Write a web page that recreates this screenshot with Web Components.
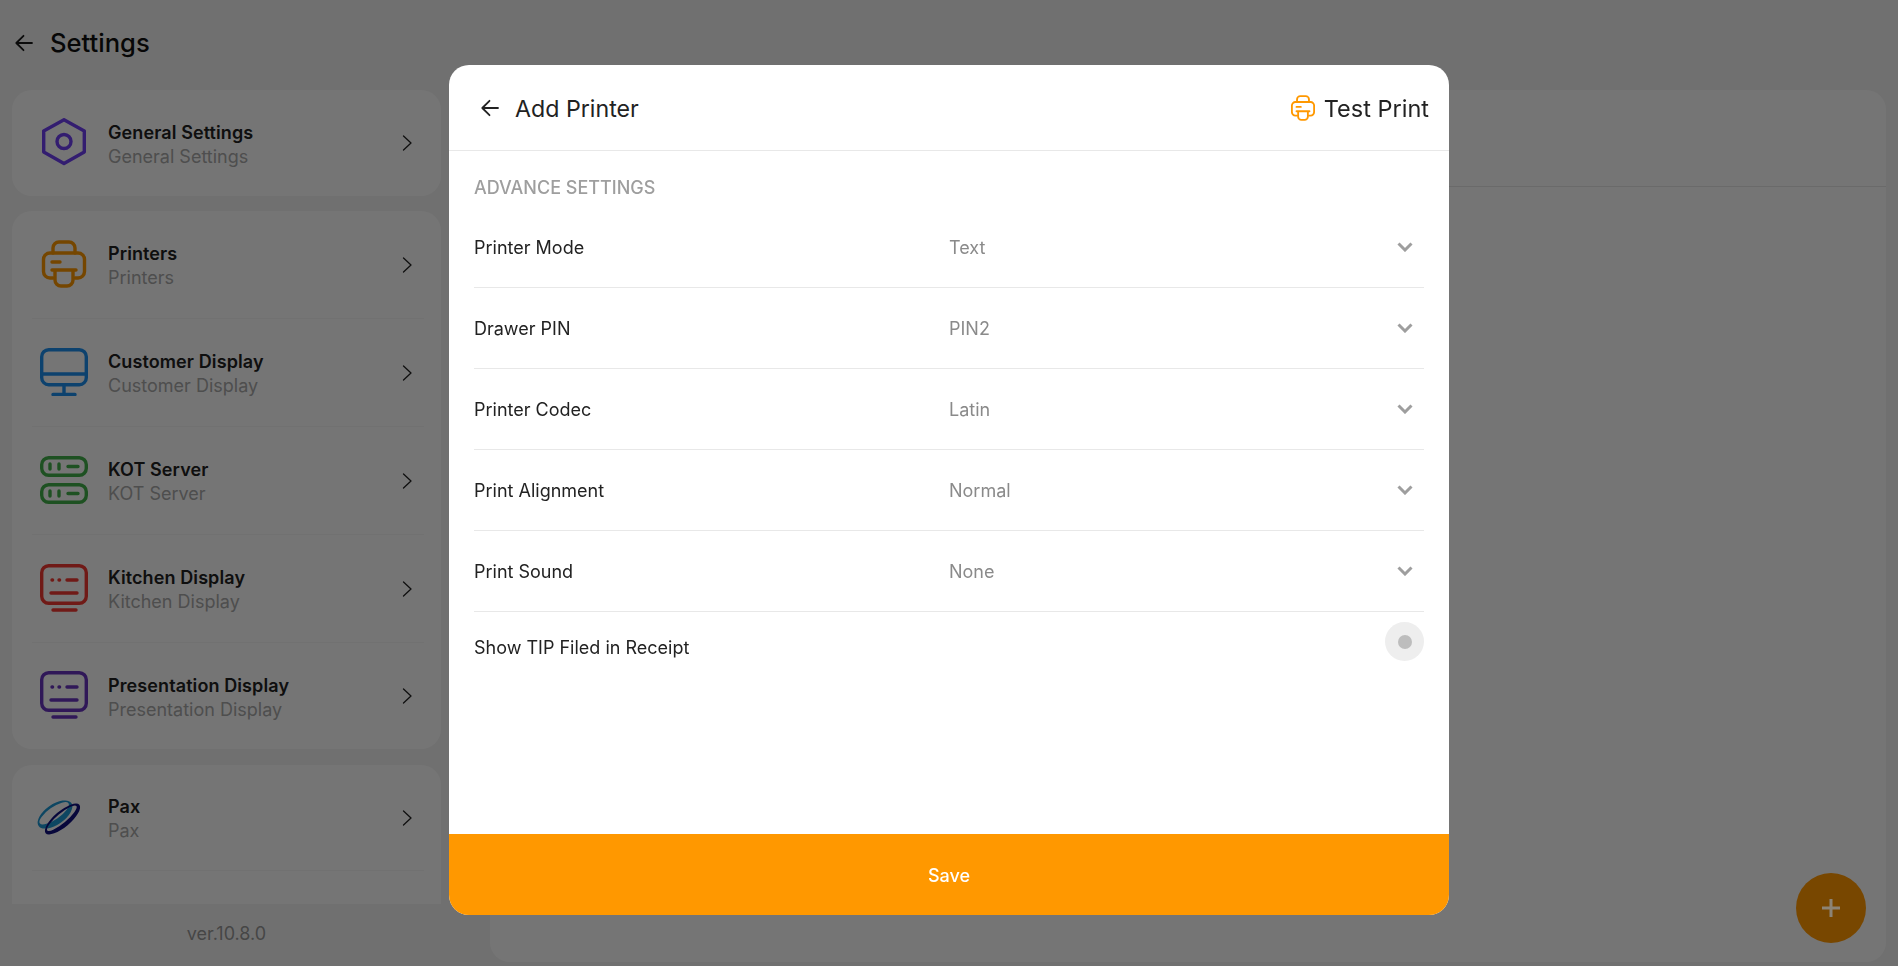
<!DOCTYPE html>
<html>
<head>
<meta charset="utf-8">
<title>Settings</title>
<style>
  html, body { margin: 0; height: 100%; overflow: hidden; }
  body { font-family: Inter, "Noto Sans", sans-serif; background: #f5f5f5; color: #1a1a1a; }
</style>
</head>
<body>

<settings-app>
  <settings-sidebar>
    <settings-group>
      <settings-item label="General Settings" icon="hexagon"></settings-item>
    </settings-group>
    <settings-group>
      <settings-item label="Printers" icon="printer" divider></settings-item>
      <settings-item label="Customer Display" icon="monitor" divider></settings-item>
      <settings-item label="KOT Server" icon="server" divider></settings-item>
      <settings-item label="Kitchen Display" icon="kitchen" divider></settings-item>
      <settings-item label="Presentation Display" icon="presentation"></settings-item>
    </settings-group>
    <settings-group>
      <settings-item label="Pax" icon="pax" divider></settings-item>
    </settings-group>
  </settings-sidebar>
  <printer-panel></printer-panel>
</settings-app>

<add-printer-dialog>
  <form-select label="Printer Mode" value="Text"></form-select>
  <form-select label="Drawer PIN" value="PIN2"></form-select>
  <form-select label="Printer Codec" value="Latin"></form-select>
  <form-select label="Print Alignment" value="Normal"></form-select>
  <form-select label="Print Sound" value="None"></form-select>
  <form-switch label="Show TIP Filed in Receipt"></form-switch>
</add-printer-dialog>

<script>
const printerPaths = `<path d="M13 13V8a6 6 0 0 1 6-6h10a6 6 0 0 1 6 6v5"/><path d="M13 38h-3a6.5 6.5 0 0 1-6.5-6.5v-12A6.5 6.5 0 0 1 10 13h28a6.5 6.5 0 0 1 6.5 6.5v12A6.5 6.5 0 0 1 38 38h-3"/><path d="M12 30h24M15 30v10a6 6 0 0 0 6 6h6a6 6 0 0 0 6-6V30M12 22h8"/>`;
const screenPaths = `<rect x="1.7" y="1.7" width="44.6" height="37.6" rx="7"/><path d="M12 16h.6M19 16h.6M27 16h10M11 29h26M13 46h23"/>`;
const stroke = (color) => `fill="none" stroke="${color}" stroke-width="3.4" stroke-linecap="round" stroke-linejoin="round"`;

const ICONS = {
  hexagon: `<svg width="48" height="48" viewBox="0 0 48 48" ${stroke('#6f3ff5')}><path d="M24 1.7 44.3 13v21L24 45.5 3.7 34V13z"/><circle cx="24" cy="23.5" r="7"/></svg>`,
  printer: `<svg width="48" height="48" viewBox="0 0 48 48" ${stroke('#ff9800')}>${printerPaths}</svg>`,
  monitor: `<svg width="48" height="48" viewBox="0 0 48 48" ${stroke('#1e90f0')}><rect x="1.7" y="1.7" width="44.6" height="35" rx="7"/><path d="M2 26h44M24 37v9.5M13 46.5h22"/></svg>`,
  server: `<svg width="48" height="48" viewBox="0 0 48 48" ${stroke('#43b04a')}><rect x="1.7" y="1.7" width="44.6" height="17.6" rx="7"/><rect x="1.7" y="28.7" width="44.6" height="17.6" rx="7"/><path d="M10 8v5M19 8v5M28 10.5h10M10 35v5M19 35v5M28 37.5h10"/></svg>`,
  kitchen: `<svg width="48" height="48" viewBox="0 0 48 48" ${stroke('#f43a32')}>${screenPaths}</svg>`,
  presentation: `<svg width="48" height="48" viewBox="0 0 48 48" ${stroke('#6a35c0')}>${screenPaths}</svg>`,
  pax: `<svg width="48" height="48" viewBox="0 0 48 48" style="overflow:visible" fill-rule="evenodd"><path transform="translate(15 21.5) rotate(-35)" fill="#1e9ad6" d="M-20 0a20 10 0 1 0 40 0a20 10 0 1 0-40 0zM-17.5 -1.5a17.5 6 0 1 0 35 0a17.5 6 0 1 0-35 0z"/><path transform="translate(22.5 26) rotate(-40)" fill="#101080" d="M-22 0a22 8 0 1 0 44 0a22 8 0 1 0-44 0zM-19 -1a19 4.8 0 1 0 38 0a19 4.8 0 1 0-38 0z"/></svg>`
};

const backArrow = `<svg width="24" height="24" viewBox="0 0 24 24" fill="none" stroke="currentColor" stroke-width="1.8" stroke-linecap="round" stroke-linejoin="round"><path d="M20 12H4.5M11.5 4.8 4.3 12l7.2 7.2"/></svg>`;

class SettingsApp extends HTMLElement {
  constructor() {
    super();
    this.attachShadow({ mode: 'open' });
    this.shadowRoot.innerHTML = `
      <style>
        :host { display: flex; flex-direction: column; height: 966px; box-sizing: border-box; }
        header { display: flex; align-items: center; gap: 14px; height: 85px; padding: 0 12px; box-sizing: border-box; flex: none; }
        h1 { margin: 0; font-size: 25.6px; font-weight: 500; color: #111; }
        header svg { display: block; }
        .body { flex: 1; display: flex; min-height: 0; padding: 5px 12px 4px 12px; gap: 49px; }
      </style>
      <header>${backArrow}<h1>Settings</h1></header>
      <div class="body"><slot></slot></div>
    `;
  }
}

class SettingsSidebar extends HTMLElement {
  constructor() {
    super();
    this.attachShadow({ mode: 'open' });
    this.shadowRoot.innerHTML = `
      <style>
        :host { display: flex; flex-direction: column; width: 429px; flex: none; min-height: 0; }
        .list { height: 814px; overflow: hidden; display: flex; flex-direction: column; gap: 15px; }
        .ver { flex: 1; display: flex; align-items: center; justify-content: center; font-size: 18px; color: #999; }
      </style>
      <div class="list"><slot></slot></div>
      <div class="ver">ver.10.8.0</div>
    `;
  }
}

class SettingsGroup extends HTMLElement {
  constructor() {
    super();
    this.attachShadow({ mode: 'open' });
    this.shadowRoot.innerHTML = `
      <style>
        :host { display: block; flex: none; background: #fff; border-radius: 20px; padding: 0 17px 0 20px; }
        :host(:last-child) { height: 170px; margin-top: 1px; }
      </style>
      <slot></slot>
    `;
  }
}

class SettingsItem extends HTMLElement {
  constructor() {
    super();
    this.attachShadow({ mode: 'open' });
    const label = this.getAttribute('label');
    this.shadowRoot.innerHTML = `
      <style>
        :host { display: flex; align-items: center; height: 108px; box-sizing: border-box; }
        :host(:last-child) { height: 106px; }
        :host([divider]) { border-bottom: 1px solid #f7f7f7; }
        .icon { width: 48px; height: 48px; flex: none; margin: -2px 20px 0 8px; }
        .icon svg { display: block; }
        .text { flex: 1; padding-top: 2px; }
        :host(:last-child) .text { padding-top: 3px; }
        .title { font-size: 18px; font-weight: 600; line-height: 24px; color: #222; letter-spacing: .1px; }
        .sub { font-size: 18px; line-height: 24px; color: #aaa; }
        .chev { margin-right: 12.5px; display: block; }
      </style>
      <div class="icon">${ICONS[this.getAttribute('icon')]}</div>
      <div class="text"><div class="title">${label}</div><div class="sub">${label}</div></div>
      <svg class="chev" width="10" height="16" viewBox="0 0 10 16" fill="none" stroke="#222" stroke-width="1.3" stroke-linecap="round" stroke-linejoin="round"><path d="M1.5 1 9 8l-7.5 7"/></svg>
    `;
  }
}

class PrinterPanel extends HTMLElement {
  constructor() {
    super();
    this.attachShadow({ mode: 'open' });
    this.shadowRoot.innerHTML = `
      <style>
        :host { display: block; flex: 1; background: #fff; border-radius: 20px; }
        .top { height: 96px; border-bottom: 1px solid #e8e8e8; }
      </style>
      <div class="top"></div>
    `;
  }
}

class AddPrinterDialog extends HTMLElement {
  constructor() {
    super();
    this.attachShadow({ mode: 'open' });
    this.shadowRoot.innerHTML = `
      <style>
        :host { position: fixed; inset: 0; display: flex; align-items: flex-start; justify-content: center; background: rgba(0,0,0,.54); padding-top: 65px; box-sizing: border-box; }
        .dialog { width: 1000px; height: 850px; background: #fff; border-radius: 20px; overflow: hidden; display: flex; flex-direction: column; }
        .head { height: 86px; flex: none; box-sizing: border-box; border-bottom: 1px solid #e8e8e8; display: flex; align-items: center; padding: 0 20px 0 29px; color: #222; }
        .head svg { display: block; flex: none; }
        .title { font-size: 23.2px; margin-left: 13px; flex: 1; padding-top: 2px; }
        .print { font-size: 23.5px; margin-left: 8px; padding-top: 2px; }
        .content { flex: 1; padding: 0 25px; display: flex; flex-direction: column; }
        .section { font-size: 18px; font-weight: 500; color: #9e9e9e; height: 56px; padding-top: 25px; box-sizing: border-box; line-height: 24px; flex: none; }
        .save { height: 81px; flex: none; background: #ff9800; color: #fff; border: 0; padding: 2px 0 0; font: 500 18px Inter, sans-serif; }
      </style>
      <div class="dialog">
        <div class="head">
          ${backArrow}
          <div class="title">Add Printer</div>
          <svg width="26" height="28" viewBox="0 0 48 48" ${stroke('#ff9800')}>${printerPaths}</svg>
          <div class="print">Test Print</div>
        </div>
        <div class="content">
          <div class="section">ADVANCE SETTINGS</div>
          <slot></slot>
        </div>
        <button class="save">Save</button>
      </div>
      <fab-button></fab-button>
    `;
  }
}

class FormSelect extends HTMLElement {
  constructor() {
    super();
    this.attachShadow({ mode: 'open' });
    this.shadowRoot.innerHTML = `
      <style>
        :host { display: grid; grid-template-columns: 475px 1fr 38px; align-items: center; height: 81px; flex: none; box-sizing: border-box; border-bottom: 1px solid #e8e8e8; font-size: 18px; color: #222; }
        .value { color: #8a8a8a; }
        svg { display: block; justify-self: center; }
      </style>
      <div>${this.getAttribute('label')}</div>
      <div class="value">${this.getAttribute('value')}</div>
      <svg width="16" height="10" viewBox="0 0 16 10" fill="none" stroke="#9e9e9e" stroke-width="3"><path d="M1.5 1.5 8 8l6.5-6.5"/></svg>
    `;
  }
}

class FormSwitch extends HTMLElement {
  constructor() {
    super();
    this.attachShadow({ mode: 'open' });
    this.shadowRoot.innerHTML = `
      <style>
        :host { display: flex; justify-content: space-between; padding-top: 10px; font-size: 18px; color: #222; }
        .label { padding-top: 15px; }
        .knob { width: 39px; height: 39px; border-radius: 50%; background: #eee; display: flex; align-items: center; justify-content: center; }
        .knob i { width: 14px; height: 14px; border-radius: 50%; background: #bdbdbd; }
      </style>
      <div class="label">${this.getAttribute('label')}</div>
      <div class="knob"><i></i></div>
    `;
  }
}

class FabButton extends HTMLElement {
  constructor() {
    super();
    this.attachShadow({ mode: 'open' });
    this.shadowRoot.innerHTML = `
      <style>
        :host { position: fixed; left: 1796px; top: 873px; width: 70px; height: 70px; border-radius: 50%; background: #784700; display: flex; align-items: center; justify-content: center; }
        svg { display: block; }
      </style>
      <svg width="20" height="20" viewBox="0 0 20 20" stroke="#8c8476" stroke-width="3"><path d="M10 1v18M1 10h18"/></svg>
    `;
  }
}

customElements.define('settings-app', SettingsApp);
customElements.define('settings-sidebar', SettingsSidebar);
customElements.define('settings-group', SettingsGroup);
customElements.define('settings-item', SettingsItem);
customElements.define('printer-panel', PrinterPanel);
customElements.define('add-printer-dialog', AddPrinterDialog);
customElements.define('form-select', FormSelect);
customElements.define('form-switch', FormSwitch);
customElements.define('fab-button', FabButton);
</script>
</body>
</html>
